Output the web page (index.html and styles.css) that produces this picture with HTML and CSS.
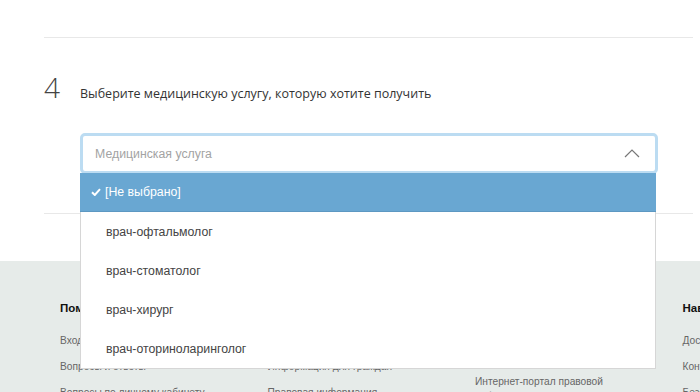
FILE: index.html
```html
<!doctype html>
<html lang="ru">
<head>
  <meta charset="utf-8">
  <title>Запись на приём</title>
  <link rel="stylesheet" href="styles.css">
</head>
<body>
  <main class="page">
    <section class="step step-done"></section>
    <section class="step">
      <div class="step-head">
        <span class="step-num">4</span>
        <h2 class="step-title">Выберите медицинскую услугу, которую хотите получить</h2>
      </div>
      <div class="select open">
        <div class="select-box">
          <span class="select-placeholder">Медицинская услуга</span>
          <svg class="select-caret" width="16" height="10" viewBox="0 0 16 10">
            <polyline points="1,9 8,2 15,9" fill="none" stroke="#777" stroke-width="1.2"/>
          </svg>
        </div>
        <ul class="select-list">
          <li class="select-item selected">
            <svg class="check" width="10" height="8" viewBox="0 0 10 8">
              <path d="M1 4.2 L3.8 7 L9 1.2" fill="none" stroke="#fff" stroke-width="2"/>
            </svg>
            [Не выбрано]
          </li>
          <li class="select-item">врач-офтальмолог</li>
          <li class="select-item">врач-стоматолог</li>
          <li class="select-item">врач-хирург</li>
          <li class="select-item">врач-оториноларинголог</li>
        </ul>
      </div>
    </section>
  </main>

  <footer class="footer">
    <div class="footer-cols">
      <div class="footer-col">
        <h3>Помощь</h3>
        <a href="#">Вход на портал</a>
        <a href="#">Вопросы и ответы</a>
        <a href="#">Вопросы по личному кабинету</a>
      </div>
      <div class="footer-col">
        <h3>О портале</h3>
        <a href="#">О проекте</a>
        <a href="#">Информация для граждан</a>
        <a href="#">Правовая информация</a>
      </div>
      <div class="footer-col">
        <h3>Партнёры</h3>
        <a href="#">Министерство здравоохранения РФ</a>
        <a href="#">Интернет-портал правовой информации</a>
      </div>
      <div class="footer-col">
        <h3>Навигация</h3>
        <a href="#">Доступная среда</a>
        <a href="#">Контакты</a>
        <a href="#">Безопасность</a>
      </div>
    </div>
  </footer>
</body>
</html>
```

FILE: styles.css
```css
html, body {
  margin: 0;
  overflow: hidden;
}
body {
  font-family: "Liberation Sans", Arial, sans-serif;
  color: #333;
  background: #fff;
}
.page {
  margin: 0 7px 0 44px;
}
.step {
  border-bottom: 1px solid #e8e8e8;
}
.step-done {
  height: 37px;
}
.step-head {
  display: flex;
  align-items: baseline;
  padding-top: 35px;
}
.step-num {
  width: 36px;
  font-family: "Open Sans", sans-serif;
  font-weight: 300;
  font-size: 28px;
  line-height: 28px;
  color: #444;
}
.step-title {
  margin: 0;
  font-family: "Open Sans", sans-serif;
  font-weight: 400;
  font-size: 12.5px;
  color: #333;
}
.select {
  position: relative;
  margin: 31px 35px 39px 36px;
}
.select-box {
  display: flex;
  align-items: center;
  justify-content: space-between;
  box-sizing: border-box;
  height: 41px;
  padding: 0 15px 0 12px;
  border: 3px solid #bcdcf2;
  border-radius: 5px;
  background: #fff;
  font-size: 12.3px;
}
.select-placeholder {
  color: #a3a3a3;
}
.select-caret {
  margin-top: -2px;
}
.select-list {
  position: absolute;
  z-index: 10;
  top: 40px;
  left: 0;
  width: 576px;
  box-sizing: border-box;
  margin: 0;
  padding: 0;
  list-style: none;
  background: #fff;
  border: 1px solid #d6d6d6;
  border-top: 0;
}
.select-item {
  display: flex;
  align-items: center;
  height: 39px;
  padding-left: 25px;
  font-size: 12.3px;
  color: #444;
}
.select-item.selected {
  padding-left: 11px;
  margin: 0 -1px;
  background: #69a7d2;
  border-bottom: 1px solid #5d98c2;
  height: 38px;
  color: #fff;
}
.check {
  margin-right: 4px;
}
.footer {
  margin-top: 47px;
  padding: 40px 0 40px 60px;
  background: #e6ebe9;
  overflow: hidden;
}
.footer-cols {
  display: grid;
  grid-template-columns: repeat(4, 207.5px);
}
.footer-col {
  display: flex;
  flex-direction: column;
  gap: 11px;
  padding-right: 50px;
}
.footer-col h3 {
  margin: 0 0 6px;
  font-size: 11.5px;
  line-height: 15px;
  color: #111;
}
.footer-col a {
  font-size: 10.2px;
  line-height: 15px;
  color: #666;
  text-decoration: none;
}
```
